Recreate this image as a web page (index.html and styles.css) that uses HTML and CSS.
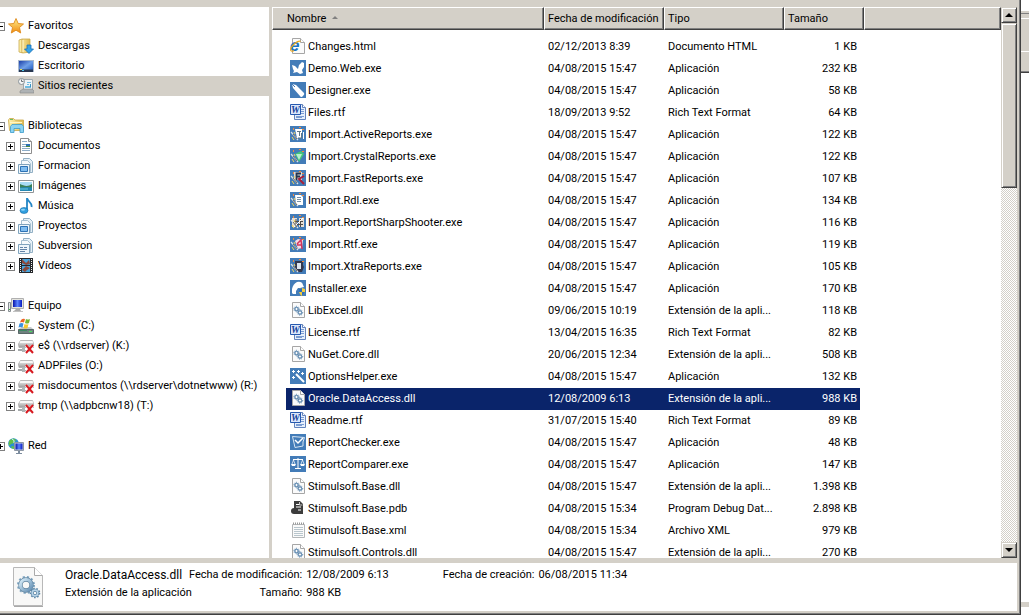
FILE: index.html
```
<!DOCTYPE html>
<html lang="es">
<head>
  <meta charset="UTF-8">
  <meta name="viewport" content="width=device-width, initial-scale=1.0">
  <title>Explorador</title>
  <link rel="stylesheet" href="styles.css">
</head>
<body>
  <!-- Icon sprites -->
  <svg class="sprites" aria-hidden="true">
    <defs>
      <linearGradient id="g-gold" x1="0" y1="0" x2="0" y2="1"><stop offset="0" stop-color="#fff08a"/><stop offset="1" stop-color="#f08a10"/></linearGradient>
      <linearGradient id="g-folder" x1="0" y1="0" x2="1" y2="0"><stop offset="0" stop-color="#fff3b0"/><stop offset="1" stop-color="#dfb94f"/></linearGradient>
      <linearGradient id="g-blue" x1="0" y1="0" x2="1" y2="1"><stop offset="0" stop-color="#1c3fa8"/><stop offset="0.5" stop-color="#6fa0e8"/><stop offset="1" stop-color="#1b55bd"/></linearGradient>
      <linearGradient id="g-screen" x1="0" y1="0" x2="1" y2="0"><stop offset="0" stop-color="#0713a8"/><stop offset="0.5" stop-color="#5b83ff"/><stop offset="1" stop-color="#0a1cc0"/></linearGradient>
      <linearGradient id="g-drive" x1="0" y1="0" x2="0" y2="1"><stop offset="0" stop-color="#f6f6f6"/><stop offset="1" stop-color="#9a9a9a"/></linearGradient>
      <linearGradient id="g-gear" x1="0" y1="0" x2="1" y2="1"><stop offset="0" stop-color="#d6ecf8"/><stop offset="1" stop-color="#6590b4"/></linearGradient>
    </defs>
    <symbol id="i-star" viewBox="0 0 16 16">
      <path d="M8 .5l2.200 5 5.300.5-4 3.500 1.200 5.500L8 12.200 3.300 15l1.200-5.500L.5 6l5.300-.5z" fill="url(#g-gold)" stroke="#df8a1c" stroke-width=".9" stroke-linejoin="round"/>
    </symbol>
    <symbol id="i-downloads" viewBox="0 0 16 16">
      <path d="M1 2l3-1h8v13l-7 1-4-1z" fill="url(#g-folder)" stroke="#c9a94e" stroke-width=".8"/>
      <path d="M4 1v14" stroke="#cda84c"/><path d="M5 2v12" stroke="#fff8d0"/>
      <path d="M9 7h4v4h2.500L11 15.500 6.500 11H9z" fill="#35a2e8" stroke="#1670b8" stroke-width=".8"/>
    </symbol>
    <symbol id="i-desktop" viewBox="0 0 16 16">
      <path d="M0 2h16v12H0z" fill="#a9b9cd"/><path d="M1 3h14v10H1z" fill="url(#g-blue)"/>
      <path d="M1 11.500h14V14H1z" fill="#293851"/><path d="M2 11h2v1H2z" fill="#e5e35c"/><path d="M4 12h2v1H4z" fill="#4fc3e8"/>
    </symbol>
    <symbol id="i-recent" viewBox="0 0 16 16">
      <path d="M5.500 1.500h9V12h-9z" fill="#eef3f6" stroke="#a0a8ad"/>
      <path d="M7 8h6v2H7zM9 4h4v1H9zM9 6h2v1H9z" fill="#6fbbe0"/><path d="M12 6h1v3h-1z" fill="#3893c4"/>
      <path d="M2 13l3-2h9l2 2v2H2z" fill="#aeb2b4" stroke="#888" stroke-width=".6"/>
      <circle cx="3.500" cy="3.500" r="3" fill="#f5f5f5" stroke="#8b9398"/><path d="M3.500 1.500v2h2" fill="none" stroke="#6d7478"/>
    </symbol>
    <symbol id="i-libraries" viewBox="0 0 16 16">
      <path d="M.5 2l1-1.500h4L7 2h8.500v10.500h-14z" fill="url(#g-folder)" stroke="#c9a748" stroke-width=".8"/>
      <path d="M2 4.500h12" stroke="#fff7c4"/><path d="M2 1.500h3" stroke="#6dbb5e"/>
      <path d="M4 6.500h10l1.500 2v6H12v-4H6v4H2.500v-6z" fill="#8cd3f2" stroke="#3b9ccc" stroke-width=".8"/>
    </symbol>
    <symbol id="i-document" viewBox="0 0 16 16">
      <path d="M2.500.5h8l3 3v12h-11z" fill="#fff" stroke="#8d8d8d"/><path d="M10.500.5v3h3" fill="#e4e4e4" stroke="#8d8d8d"/>
      <path d="M4 3.500h5M4 6.500h4M4 8.500h4M4 10.500h8M4 12.500h8" stroke="#8cacc7"/><path d="M8 6h4v3H8z" fill="#2b71b8"/><path d="M8 8h4v1H8z" fill="#4b8a3a"/>
    </symbol>
    <symbol id="i-stack" viewBox="0 0 16 16">
      <path d="M5.500.5h6l3 3v11h-9z" fill="#e6f0f7" stroke="#93b0c4"/><path d="M3.500 2.500h6l3 3v8h-9z" fill="#f6fafc" stroke="#a5bfd0"/>
      <path d="M.5 6.500h11v9H.5z" fill="#eef6fb" stroke="#7fa3bd"/>
    </symbol>
    <symbol id="i-library" viewBox="0 0 16 16">
      <use href="#i-stack"/><path d="M2.500 8.500h7v5h-7z" fill="#7fbdf0" stroke="#2e72b4"/>
    </symbol>
    <symbol id="i-library-text" viewBox="0 0 16 16">
      <use href="#i-stack"/><path d="M2 9.500h3M2 11.500h7M6 9.500h3M2 13.500h5" stroke="#6384a8"/>
    </symbol>
    <symbol id="i-pictures" viewBox="0 0 16 16">
      <path d="M.5 2.500h15v12H.5z" fill="#fff" stroke="#8f9497"/><path d="M2 4h12v9H2z" fill="#a8dcf5"/>
      <path d="M2 6c4 2 8 3 12 0v4H2z" fill="#3b8057"/><path d="M2 9.500c4-.5 8-1 12 0V13H2z" fill="#2387b2"/><path d="M2 11h8" stroke="#6ac9de"/>
    </symbol>
    <symbol id="i-music" viewBox="0 0 16 16">
      <path d="M9 12.500V0c1 4 5.500 4.500 4.500 9" fill="none" stroke="#2386c6" stroke-width="1.800"/>
      <ellipse cx="6" cy="12.500" rx="4" ry="3" fill="#2f9fe0" stroke="#126aa4" stroke-width=".6"/><ellipse cx="5" cy="11.700" rx="2" ry="1" fill="#8ed5f8"/>
    </symbol>
    <symbol id="i-video" viewBox="0 0 16 16">
      <path d="M1 0h14v15H1z" fill="#25282b"/><path d="M4 1h8v6H4zM4 8h8v6H4z" fill="#48a4dc"/>
      <path d="M4 1l4 4 3-3 1 4-4 1-4-2zM4 12l4-4 4 2-3 2-2 2z" fill="#8b4a3c"/>
      <path d="M2.500 1v14M13.500 1v14" stroke="#f3f3f3" stroke-dasharray="1 1"/>
    </symbol>
    <symbol id="i-computer" viewBox="0 0 16 16">
      <path d="M.5 4.500h2v9h-2z" fill="#e5e8e9" stroke="#858c90"/><path d="M1 11h1v1H1z" fill="#3bc13b"/>
      <path d="M3.500.5h12v10h-12z" fill="#e4e4de" stroke="#b0b0b0"/><path d="M5 2h9v7H5z" fill="url(#g-screen)"/>
      <path d="M8 11h4l1 2H6z" fill="#aaa"/><path d="M5 13.500h10" stroke="#c2c2c2"/>
    </symbol>
    <symbol id="i-system" viewBox="0 0 16 16">
      <path d="M3 9h10l3 3v4H0v-4z" fill="#c5cbcd"/><path d="M.5 11.500h15v4H.5z" fill="#6f8180" stroke="#596867"/><path d="M11 13h3v1h-3z" fill="#46e35b"/><path d="M1 12h8v1H1z" fill="#3c8a61"/>
      <path d="M3 2q2-2 4-1L6 4.500q-2-1-4 0z" fill="#ee6526"/><path d="M8 1q2 1 4 0l-1 4q-2 1-4 0z" fill="#77b52e"/>
      <path d="M1.500 5.500q2-1 4 0l-1 4q-2-1-4 0z" fill="#3a91df"/><path d="M6.500 6q2 1 4 0l-1 4q-2 1-4 0z" fill="#f8c72d"/>
    </symbol>
    <symbol id="i-netdrive" viewBox="0 0 16 16">
      <path d="M.5 6L2.500 2.500h12l1 3v4H1z" fill="url(#g-drive)" stroke="#aaa" stroke-width=".8"/><path d="M2.500 3h12l.5 2H1.500z" fill="#f7f7f7"/>
      <path d="M5 9v3H0M5 13h7" fill="none" stroke="#858c8f" stroke-width="1.600"/><path d="M4 9h3v5H4z" fill="#b0b5b7"/>
      <path d="M8 7.500l7 7M15 7.500l-7 7" stroke="#fff" stroke-width="3"/><path d="M8 7l7 8M15 7l-7 8" stroke="#d7191f" stroke-width="2"/>
    </symbol>
    <symbol id="i-network" viewBox="0 0 16 16">
      <circle cx="5.500" cy="5.500" r="5.300" fill="#2a91d3"/><path d="M2 2q4-3 6 0L6 5 3 6 1 8Q0 4 2 2zM4 8l3 1-1 2q-2 0-3-2z" fill="#61bf4a"/><path d="M4 1q3 1 2 4" fill="none" stroke="#caf2ff"/>
      <path d="M6.500 4.500h9v8h-9z" fill="#c8d0da" stroke="#8e98a5"/><path d="M7.500 5.500h7v6h-7z" fill="url(#g-screen)"/><path d="M10 13h2v2h-2zM8 15h6v1H8z" fill="#7c8c9e"/>
    </symbol>
    <symbol id="i-page" viewBox="0 0 16 16">
      <path d="M2.500.5h8l4 4v11h-12z" fill="#fbfbfb" stroke="#a6a6a6"/><path d="M10.500.5v4h4" fill="#fff" stroke="#a6a6a6"/>
    </symbol>
    <symbol id="i-html" viewBox="0 0 16 16">
      <use href="#i-page"/>
      <text x="0" y="13" font-family="Liberation Sans" font-size="17" font-weight="bold" font-style="italic" fill="#1c74c4">e</text>
      <path d="M.8 12.500C-.5 9 8 1.500 10.500 3.500M.8 12.500q1 1.500 3 0" fill="none" stroke="#eba91c" stroke-width="1.200"/>
    </symbol>
    <symbol id="i-dll" viewBox="0 0 16 16">
      <use href="#i-page"/>
      <g fill="none" stroke="#386c9c"><circle cx="6.500" cy="7" r="1.700"/><circle cx="10" cy="10.500" r="1.700"/><circle cx="6.500" cy="7" r="2.700" stroke-dasharray="1 1" stroke-width=".8"/><circle cx="10" cy="10.500" r="2.700" stroke-dasharray="1 1" stroke-width=".8"/></g>
    </symbol>
    <symbol id="i-rtf" viewBox="0 0 16 16">
      <path d="M4.500.5h8l3 3v12h-11z" fill="#e7effc" stroke="#6484bd"/><path d="M12.500.5v3h3" fill="#fff" stroke="#6484bd"/>
      <path d="M11 5.500h3M11 7.500h3M11 9.500h3M6 12.500h8M6 13.500h6" stroke="#7b9dd2"/>
      <path d="M.5.5h10v10H.5z" fill="#dbe7fa" stroke="#285aaf"/>
      <text x="1" y="9" font-family="Liberation Serif" font-size="10" font-weight="bold" font-style="italic" fill="#163f9a">W</text>
    </symbol>
    <symbol id="i-web" viewBox="0 0 16 16">
      <path d="M0 0h16v16H0z" fill="#437cb8"/><path d="M2 5l3 1 3 3 1-4 3-3 2 1v4l-2 3 1 3-3 1-3-2-4 1 1-2-1-2z" fill="#fff"/>
    </symbol>
    <symbol id="i-designer" viewBox="0 0 16 16">
      <path d="M0 0h16v16H0z" fill="#437cb8"/><path d="M2 2l4 1 8 8q1 1-1 3t-3 0L3 6z" fill="#fff"/><path d="M2 2l3 3" stroke="#437cb8"/>
    </symbol>
    <!-- shared base of the Import.* tools -->
    <symbol id="i-import" viewBox="0 0 16 16">
      <path d="M0 0h16v16H0z" fill="#437cb8"/>
    </symbol>
    <symbol id="i-wand" viewBox="0 0 16 16">
      <path d="M1 6l7 8" stroke="#dfe3e6" stroke-width="1.200"/><path d="M3 8l4 5" stroke="#544d3c" stroke-width=".8"/><path d="M2 11l2 3M4 6l1 2" stroke="#f5d75a"/>
      <path d="M3 2h1v2H3zM9 1h2v1H9zM12 3h2v1h-2z" fill="#f28a3c"/>
    </symbol>
    <symbol id="i-imp-active" viewBox="0 0 16 16">
      <use href="#i-import"/><path d="M5 3h7v9H7z" fill="#fff"/><path d="M7 5.500h4M9.500 5v5M11.500 7v5H8" fill="none" stroke="#607886"/><path d="M13.500 6v7" stroke="#fff"/><use href="#i-wand"/>
    </symbol>
    <symbol id="i-imp-crystal" viewBox="0 0 16 16">
      <use href="#i-import"/><path d="M5 6l6-3 3 3-5 8z" fill="#42c779"/><path d="M6 6h6l-3 6z" fill="#b6efd0"/><use href="#i-wand"/>
    </symbol>
    <symbol id="i-imp-fast" viewBox="0 0 16 16">
      <use href="#i-import"/><path d="M4 2h8v8H4z" fill="#d8d8d8"/><path d="M11 3.500H6.500V10M6 6.500h4" stroke="#27364e" stroke-width="1.800" fill="none"/><path d="M14 6l-5 3 5 5" stroke="#a7213a" stroke-width="2" fill="none"/><use href="#i-wand"/>
    </symbol>
    <symbol id="i-imp-rdl" viewBox="0 0 16 16">
      <use href="#i-import"/><path d="M5 3h6l2 2v8H6z" fill="#fff"/><path d="M7 5.500h4M7 7.500h4M7 9.500h4" stroke="#7690a5"/><use href="#i-wand"/>
    </symbol>
    <symbol id="i-imp-sharp" viewBox="0 0 16 16">
      <use href="#i-import"/><path d="M2 4h5v9H2zM9 4h5v9H9z" fill="#e9dfd3"/><path d="M6 5v8M10.500 5v8M4 7.500h9M4 10.500h9" stroke="#504b48"/><path d="M13 4l-9 9" stroke="#fff"/><use href="#i-wand"/>
    </symbol>
    <symbol id="i-imp-rtf" viewBox="0 0 16 16">
      <use href="#i-import"/><path d="M5 5l3-2 5 1-1 8-4 1z" fill="#f2dce6"/><path d="M7 8l4-4 1 9M7 9h5" stroke="#d4345c" stroke-width="1.500" fill="none"/><use href="#i-wand"/>
    </symbol>
    <symbol id="i-imp-xtra" viewBox="0 0 16 16">
      <use href="#i-import"/><path d="M5 3h8v4l1 2-2 5H7L5 9z" fill="#33384e"/><path d="M7 5h4v6H7z" fill="#dbe4ee"/><use href="#i-wand"/>
    </symbol>
    <symbol id="i-installer" viewBox="0 0 16 16">
      <path d="M0 0h16v16H0z" fill="#437cb8"/><path d="M2 13V9q1-5 5-7 5-1 6 3l1 2-4 1H8l-2 3v3H3z" fill="#fff"/>
      <path d="M9 9l3-1 3 1v3q-1 3-3 4-2-1-3-4z" fill="#f4cd3d"/><path d="M9 9l3-1v4H9zM12 12h3q-1 3-3 4z" fill="#2d6fc0"/>
    </symbol>
    <symbol id="i-options" viewBox="0 0 16 16">
      <path d="M0 0h16v16H0z" fill="#437cb8"/><path d="M6 6l8 8" stroke="#fff" stroke-width="2"/>
      <path d="M3.500 2v3M2 3.500h3M8.500 2v3M7 3.500h3M12.500 4v3M11 5.500h3M3.500 8v3M2 9.500h3" stroke="#fff"/>
    </symbol>
    <symbol id="i-checker" viewBox="0 0 16 16">
      <path d="M0 0h16v16H0z" fill="#437cb8"/><path d="M13 8l1.500-4.500-12-1L5 13.500l8-1.500V8" fill="none" stroke="#d5e4f2"/><path d="M5 6l3 3 5-5" fill="none" stroke="#fff" stroke-width="1.500"/>
    </symbol>
    <symbol id="i-comparer" viewBox="0 0 16 16">
      <path d="M0 0h16v16H0z" fill="#437cb8"/><path d="M3 3.500h10M8 2v11M5 12.500h6" fill="none" stroke="#fff"/><path d="M3.500 4L2 8M3.500 4L5 8M12.500 4L11 8M12.500 4L14 8" fill="none" stroke="#fff" stroke-width=".7"/><path d="M1 8h5l-1 2H2zM10 8h5l-1 2h-3z" fill="#fff"/>
    </symbol>
    <symbol id="i-pdb" viewBox="0 0 16 16">
      <path d="M4 1h6l3 3v10H4z" fill="#3c3c3c"/><path d="M6 4.500h3M6 7h5M8 10h3" stroke="#fff" stroke-width="1.200"/><path d="M9.500 2v3h3" fill="none" stroke="#fff" stroke-width=".7"/><circle cx="4" cy="11" r="3" fill="#3c3c3c"/>
    </symbol>
    <symbol id="i-xml" viewBox="0 0 16 16">
      <path d="M2.500 2.500h12v13h-12z" fill="#fafafa" stroke="#b4b7b9"/><path d="M4 5.500h9M4 7.500h9M4 9.500h9M4 11.500h9M4 13.500h9" stroke="#b9c6cd"/><path d="M3 1.500h11" stroke="#999" stroke-width="2" stroke-dasharray="1 1"/>
    </symbol>
    <symbol id="i-dll-large" viewBox="0 0 32 42">
      <path d="M.5 1.500h21l8 8v30H.5z" fill="#f8f8f7" stroke="#b8b8b8"/><path d="M1 40.500h29" stroke="#aaa"/><path d="M21.500 1.500v8h8" fill="#fff" stroke="#aaa"/>
      <circle cx="13" cy="19" r="7.500" fill="none" stroke="#7fa5c1" stroke-width="3" stroke-dasharray="2 2"/><circle cx="13" cy="19" r="5.500" fill="none" stroke="#62859f" stroke-width="4.400"/><circle cx="13" cy="19" r="5.500" fill="none" stroke="url(#g-gear)" stroke-width="3.200"/>
      <circle cx="22" cy="27" r="4.300" fill="none" stroke="#5d88aa" stroke-width="2" stroke-dasharray="1.500 1.500"/><circle cx="22" cy="27" r="2.800" fill="none" stroke="#527b9b" stroke-width="3"/><circle cx="22" cy="27" r="2.800" fill="none" stroke="#b5d3e8" stroke-width="1.700"/>
    </symbol>
  </svg>

  <div class="window">
    <div class="content">
      <nav class="tree">
        <ul class="group">
          <li><button class="toggle minus" aria-label="Contraer Favoritos"></button><a href="#"><svg><use href="#i-star"/></svg>Favoritos</a></li>
          <li class="child leaf"><a href="#"><svg><use href="#i-downloads"/></svg>Descargas</a></li>
          <li class="child leaf"><a href="#"><svg><use href="#i-desktop"/></svg>Escritorio</a></li>
          <li class="child leaf active"><a href="#"><svg><use href="#i-recent"/></svg>Sitios recientes</a></li>
        </ul>
        <ul class="group">
          <li><button class="toggle minus" aria-label="Contraer Bibliotecas"></button><a href="#"><svg><use href="#i-libraries"/></svg>Bibliotecas</a></li>
          <li class="child"><button class="toggle" aria-label="Expandir Documentos"></button><a href="#"><svg><use href="#i-document"/></svg>Documentos</a></li>
          <li class="child"><button class="toggle" aria-label="Expandir Formacion"></button><a href="#"><svg><use href="#i-library"/></svg>Formacion</a></li>
          <li class="child"><button class="toggle" aria-label="Expandir Imágenes"></button><a href="#"><svg><use href="#i-pictures"/></svg>Imágenes</a></li>
          <li class="child"><button class="toggle" aria-label="Expandir Música"></button><a href="#"><svg><use href="#i-music"/></svg>Música</a></li>
          <li class="child"><button class="toggle" aria-label="Expandir Proyectos"></button><a href="#"><svg><use href="#i-library"/></svg>Proyectos</a></li>
          <li class="child"><button class="toggle" aria-label="Expandir Subversion"></button><a href="#"><svg><use href="#i-library-text"/></svg>Subversion</a></li>
          <li class="child"><button class="toggle" aria-label="Expandir Vídeos"></button><a href="#"><svg><use href="#i-video"/></svg>Vídeos</a></li>
        </ul>
        <ul class="group">
          <li><button class="toggle minus" aria-label="Contraer Equipo"></button><a href="#"><svg><use href="#i-computer"/></svg>Equipo</a></li>
          <li class="child"><button class="toggle" aria-label="Expandir C:"></button><a href="#"><svg><use href="#i-system"/></svg>System (C:)</a></li>
          <li class="child"><button class="toggle" aria-label="Expandir K:"></button><a href="#"><svg><use href="#i-netdrive"/></svg>e$ (\\rdserver) (K:)</a></li>
          <li class="child"><button class="toggle" aria-label="Expandir O:"></button><a href="#"><svg><use href="#i-netdrive"/></svg>ADPFiles (O:)</a></li>
          <li class="child"><button class="toggle" aria-label="Expandir R:"></button><a href="#"><svg><use href="#i-netdrive"/></svg>misdocumentos (\\rdserver\dotnetwww) (R:)</a></li>
          <li class="child"><button class="toggle" aria-label="Expandir T:"></button><a href="#"><svg><use href="#i-netdrive"/></svg>tmp (\\adpbcnw18) (T:)</a></li>
        </ul>
        <ul class="group">
          <li><button class="toggle" aria-label="Expandir Red"></button><a href="#"><svg><use href="#i-network"/></svg>Red</a></li>
        </ul>
      </nav>

      <main class="files">
        <table>
          <colgroup><col class="c-name"><col class="c-date"><col class="c-type"><col class="c-size"><col></colgroup>
          <thead>
            <tr><th>Nombre <span class="sort"></span></th><th>Fecha de modificación</th><th>Tipo</th><th>Tamaño</th><th></th></tr>
          </thead>
          <tbody>
            <tr><td><svg><use href="#i-html"/></svg>Changes.html</td><td>02/12/2013 8:39</td><td>Documento HTML</td><td>1 KB</td></tr>
            <tr><td><svg><use href="#i-web"/></svg>Demo.Web.exe</td><td>04/08/2015 15:47</td><td>Aplicación</td><td>232 KB</td></tr>
            <tr><td><svg><use href="#i-designer"/></svg>Designer.exe</td><td>04/08/2015 15:47</td><td>Aplicación</td><td>58 KB</td></tr>
            <tr><td><svg><use href="#i-rtf"/></svg>Files.rtf</td><td>18/09/2013 9:52</td><td>Rich Text Format</td><td>64 KB</td></tr>
            <tr><td><svg><use href="#i-imp-active"/></svg>Import.ActiveReports.exe</td><td>04/08/2015 15:47</td><td>Aplicación</td><td>122 KB</td></tr>
            <tr><td><svg><use href="#i-imp-crystal"/></svg>Import.CrystalReports.exe</td><td>04/08/2015 15:47</td><td>Aplicación</td><td>122 KB</td></tr>
            <tr><td><svg><use href="#i-imp-fast"/></svg>Import.FastReports.exe</td><td>04/08/2015 15:47</td><td>Aplicación</td><td>107 KB</td></tr>
            <tr><td><svg><use href="#i-imp-rdl"/></svg>Import.Rdl.exe</td><td>04/08/2015 15:47</td><td>Aplicación</td><td>134 KB</td></tr>
            <tr><td><svg><use href="#i-imp-sharp"/></svg>Import.ReportSharpShooter.exe</td><td>04/08/2015 15:47</td><td>Aplicación</td><td>116 KB</td></tr>
            <tr><td><svg><use href="#i-imp-rtf"/></svg>Import.Rtf.exe</td><td>04/08/2015 15:47</td><td>Aplicación</td><td>119 KB</td></tr>
            <tr><td><svg><use href="#i-imp-xtra"/></svg>Import.XtraReports.exe</td><td>04/08/2015 15:47</td><td>Aplicación</td><td>105 KB</td></tr>
            <tr><td><svg><use href="#i-installer"/></svg>Installer.exe</td><td>04/08/2015 15:47</td><td>Aplicación</td><td>170 KB</td></tr>
            <tr><td><svg><use href="#i-dll"/></svg>LibExcel.dll</td><td>09/06/2015 10:19</td><td>Extensión de la apli...</td><td>118 KB</td></tr>
            <tr><td><svg><use href="#i-rtf"/></svg>License.rtf</td><td>13/04/2015 16:35</td><td>Rich Text Format</td><td>82 KB</td></tr>
            <tr><td><svg><use href="#i-dll"/></svg>NuGet.Core.dll</td><td>20/06/2015 12:34</td><td>Extensión de la apli...</td><td>508 KB</td></tr>
            <tr><td><svg><use href="#i-options"/></svg>OptionsHelper.exe</td><td>04/08/2015 15:47</td><td>Aplicación</td><td>132 KB</td></tr>
            <tr class="selected"><td><svg><use href="#i-dll"/></svg>Oracle.DataAccess.dll</td><td>12/08/2009 6:13</td><td>Extensión de la apli...</td><td>988 KB</td></tr>
            <tr><td><svg><use href="#i-rtf"/></svg>Readme.rtf</td><td>31/07/2015 15:40</td><td>Rich Text Format</td><td>89 KB</td></tr>
            <tr><td><svg><use href="#i-checker"/></svg>ReportChecker.exe</td><td>04/08/2015 15:47</td><td>Aplicación</td><td>48 KB</td></tr>
            <tr><td><svg><use href="#i-comparer"/></svg>ReportComparer.exe</td><td>04/08/2015 15:47</td><td>Aplicación</td><td>147 KB</td></tr>
            <tr><td><svg><use href="#i-dll"/></svg>Stimulsoft.Base.dll</td><td>04/08/2015 15:47</td><td>Extensión de la apli...</td><td>1.398 KB</td></tr>
            <tr><td><svg><use href="#i-pdb"/></svg>Stimulsoft.Base.pdb</td><td>04/08/2015 15:34</td><td>Program Debug Dat...</td><td>2.898 KB</td></tr>
            <tr><td><svg><use href="#i-xml"/></svg>Stimulsoft.Base.xml</td><td>04/08/2015 15:34</td><td>Archivo XML</td><td>979 KB</td></tr>
            <tr><td><svg><use href="#i-dll"/></svg>Stimulsoft.Controls.dll</td><td>04/08/2015 15:47</td><td>Extensión de la apli...</td><td>270 KB</td></tr>
          </tbody>
        </table>
      </main>

      <div class="scrollbar">
        <button class="up" aria-label="Subir"></button>
        <div class="thumb"></div>
        <button class="down" aria-label="Bajar"></button>
      </div>
    </div>

    <footer class="details">
      <svg class="preview"><use href="#i-dll-large"/></svg>
      <div class="title">
        <strong>Oracle.DataAccess.dll</strong>
        <span>Extensión de la aplicación</span>
      </div>
      <dl>
        <dt>Fecha de modificación:</dt><dd>12/08/2009 6:13</dd>
        <dt>Tamaño:</dt><dd>988 KB</dd>
      </dl>
      <dl>
        <dt>Fecha de creación:</dt><dd>06/08/2015 11:34</dd>
      </dl>
    </footer>
  </div>

  <!-- edge of the window behind -->
  <div class="behind">
    <div class="behind-line"></div>
    <div class="behind-bar"></div>
    <div class="behind-tools"></div>
    <div class="behind-status"></div>
  </div>
</body>
</html>
```
FILE: styles.css
```
* {
  box-sizing: border-box;
}

body {
  display: flex;
  height: 100vh;
  margin: 0;
  overflow: hidden;
  background: #fff;
  color: #000;
  font-family: Roboto, sans-serif;
  font-size: 11px;
  line-height: 20px;
}

svg {
  flex: none;
  width: 16px;
  height: 16px;
}

.sprites {
  position: absolute;
  width: 0;
  height: 0;
}

.window {
  display: flex;
  flex: 1;
  flex-direction: column;
  min-width: 0;
  padding: 7px 3px 3px 0;
  background: #d4d0c8;
  border-right: 1px solid #404040;
  border-bottom: 1px solid #404040;
  box-shadow: inset -1px -1px #808080;
}

.content {
  display: flex;
  flex: 1;
  min-height: 0;
}

/* Folder tree */
.tree {
  width: 269px;
  padding-top: 9px;
  margin-right: 3px;
  overflow: hidden;
  background: #fff;
}

.group {
  margin: 0 0 20px;
  padding: 0;
  list-style: none;
}

.group li {
  display: flex;
  align-items: center;
  height: 20px;
  gap: 3px;
  margin-left: -4px;
  white-space: nowrap;
}

.group .child {
  padding-left: 10px;
}

.group .leaf {
  padding-left: 22px;
}

.group a {
  display: flex;
  align-items: center;
  gap: 4px;
  color: inherit;
  text-decoration: none;
}

.group .active {
  background: #d4d0c8;
}

.toggle {
  width: 9px;
  height: 9px;
  padding: 0;
  border: 1px solid #808080;
  background:
    linear-gradient(#000, #000) center / 5px 1px no-repeat,
    linear-gradient(#000, #000) center / 1px 5px no-repeat,
    #fff;
}

.toggle.minus {
  background: linear-gradient(#000, #000) center / 5px 1px no-repeat, #fff;
}

/* File list */
.files {
  flex: 1;
  min-width: 0;
  overflow: hidden;
  background: #fff;
}

table {
  width: 100%;
  table-layout: fixed;
  border-collapse: separate;
  border-spacing: 0;
}

.c-name { width: 272px; }
.c-date, .c-type { width: 120px; }
.c-size { width: 80px; }

th {
  height: 23px;
  padding: 0 0 0 3px;
  background: #d4d0c8;
  border: 1px solid;
  border-color: #fff #404040 #404040 #fff;
  box-shadow: inset -1px -1px #808080;
  font-weight: normal;
  text-align: left;
  white-space: nowrap;
}

th:first-child {
  padding-left: 14px;
}

.sort {
  display: inline-block;
  margin: 0 0 3px 3px;
  border: 3px solid transparent;
  border-top: 0;
  border-bottom-color: #808080;
}

tbody::before {
  content: "";
  display: block;
  height: 6px;
}

td {
  height: 22px;
  padding: 0 0 0 4px;
  white-space: nowrap;
  background-clip: padding-box;
}

td:first-child {
  border-left: 14px solid transparent;
}

td:nth-child(4) {
  padding-right: 3px;
  border-right: 4px solid transparent;
  text-align: right;
}

td svg {
  margin-right: 2px;
  vertical-align: -4px;
}

.selected td {
  background-color: #0a246a;
  color: #fff;
}

/* Scrollbar */
.scrollbar {
  display: flex;
  flex-direction: column;
  width: 16px;
  background: repeating-conic-gradient(#fff 0 25%, #d4d0c8 0 50%) 0 0 / 2px 2px;
}

.scrollbar button,
.thumb {
  padding: 0;
  background: #d4d0c8;
  border: 1px solid;
  border-color: #d4d0c8 #404040 #404040 #d4d0c8;
  box-shadow: inset 1px 1px #fff, inset -1px -1px #808080;
}

.scrollbar button {
  display: grid;
  place-items: center;
  height: 16px;
}

.thumb {
  height: 30%;
  margin-bottom: auto;
}

.up::before,
.down::before {
  content: "";
  border: 4px solid transparent;
}

.up::before {
  border-top: 0;
  border-bottom-color: #000;
}

.down::before {
  border-bottom: 0;
  border-top-color: #000;
}

/* Details pane */
.details {
  display: flex;
  height: 48px;
  margin-top: 5px;
  padding: 3px 0 0 13px;
  background: #fff;
  line-height: 18px;
  white-space: nowrap;
}

.preview {
  width: 32px;
  height: 42px;
  margin-right: 20px;
}

.title {
  display: flex;
  flex-direction: column;
  width: 124px;
}

.title strong {
  font-size: 12px;
  font-weight: normal;
}

.details dl {
  display: grid;
  grid-template-columns: auto auto;
  grid-auto-rows: 18px;
  column-gap: 4px;
  margin: 0 54px 0 0;
}

.details dt {
  text-align: right;
}

.details dd {
  margin: 0;
}

/* Window behind */
.behind {
  display: flex;
  flex-direction: column;
  width: 8px;
  padding-top: 11px;
}

.behind-line {
  height: 2px;
  background: #d4d0c8;
}

.behind-bar {
  height: 5px;
  background: #d4d0c8;
  border-top: 1px solid #808080;
}

.behind-tools {
  height: 55px;
  background: linear-gradient(#fff, #fff) 0 32px / 100% 1px no-repeat, #d4d0c8;
  border-top: 1px solid #fff;
  border-bottom: 1px solid #404040;
  box-shadow: inset 0 -1px #808080;
}

.behind-status {
  height: 5px;
  margin: auto 0 8px;
  background: #d4d0c8;
}
```
